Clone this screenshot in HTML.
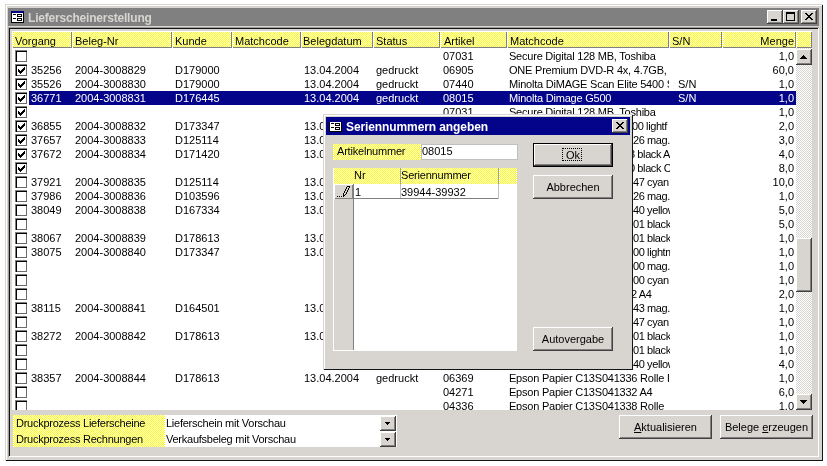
<!DOCTYPE html>
<html><head><meta charset="utf-8"><style>
html,body{margin:0;padding:0}
body{width:827px;height:466px;overflow:hidden;background:#fff;position:relative;font-family:"Liberation Sans",sans-serif;font-size:11px;color:#000}
div,svg{position:absolute}
.t{white-space:nowrap;line-height:14px;height:14px}
.b{font-weight:bold}
svg{display:block}
.t{will-change:transform}
</style></head><body>
<div style="left:5px;top:4px;width:818px;height:457px;background:#d8d5d1;box-shadow:inset 1px 1px #d8d5d1,inset -1px -1px #141414,inset 2px 2px #ffffff"></div>
<div style="left:8px;top:8px;width:811px;height:18px;background:#808080"></div>
<svg style="left:11px;top:11px" width="13" height="12" viewBox="0 0 13 12" shape-rendering="crispEdges"><rect x="0" y="0" width="13" height="12" fill="#000"/><rect x="0" y="0" width="13" height="2" fill="#000080"/><rect x="1" y="2" width="11" height="9" fill="#fff"/><rect x="2" y="3" width="3" height="1" fill="#000"/><rect x="2" y="7" width="3" height="1" fill="#000"/><rect x="6" y="3" width="5" height="3" fill="#000"/><rect x="7" y="4" width="3" height="1" fill="#fff"/><rect x="6" y="7" width="5" height="3" fill="#000"/><rect x="7" y="8" width="3" height="1" fill="#fff"/></svg>
<div class="t b" style="left:28px;top:11px;color:#d8d5d1;font-size:12px;letter-spacing:-0.2px">Lieferscheinerstellung</div>
<div style="left:767px;top:10px;width:16px;height:14px;background:#d8d5d1;box-shadow:inset -1px -1px #404040,inset 1px 1px #ffffff,inset -2px -2px #808080,inset 2px 2px #d8d5d1"></div>
<div style="left:771px;top:19px;width:6px;height:2px;background:#000"></div>
<div style="left:783px;top:10px;width:16px;height:14px;background:#d8d5d1;box-shadow:inset -1px -1px #404040,inset 1px 1px #ffffff,inset -2px -2px #808080,inset 2px 2px #d8d5d1"></div>
<div style="left:786px;top:12px;width:9px;height:9px;box-sizing:border-box;border:1px solid #000;border-top-width:2px"></div>
<div style="left:801px;top:10px;width:16px;height:14px;background:#d8d5d1;box-shadow:inset -1px -1px #404040,inset 1px 1px #ffffff,inset -2px -2px #808080,inset 2px 2px #d8d5d1"></div>
<svg style="left:805px;top:13px" width="8" height="7" viewBox="0 0 8 7" shape-rendering="crispEdges"><path d="M0 0h2v1h-2zM6 0h2v1h-2zM1 1h2v1h-2zM5 1h2v1h-2zM2 2h4v1h-4zM3 3h2v1h-2zM2 4h4v1h-4zM1 5h2v1h-2zM5 5h2v1h-2zM0 6h2v1h-2zM6 6h2v1h-2z" fill="#000"/></svg>
<div style="left:8px;top:27px;width:811px;height:430px;background:#d8d5d1;box-shadow:inset 1px 1px #a0a0a0,inset -1px -1px #ffffff,inset 2px 2px #141414,inset -2px -2px #d8d5d1"></div>
<div style="left:12px;top:48px;width:784px;height:362px;background:#fff"></div>
<div style="left:12px;top:31px;width:60px;height:17px;background:conic-gradient(#fff 25%,#ff0 0 50%,#fff 0 75%,#ff0 0) 0 0/2px 2px;box-shadow:inset 1px 1px #fff,inset -1px -1px #808080"></div>
<div class="t" style="left:15px;top:34px;">Vorgang</div>
<div style="left:72px;top:31px;width:100px;height:17px;background:conic-gradient(#fff 25%,#ff0 0 50%,#fff 0 75%,#ff0 0) 0 0/2px 2px;box-shadow:inset 1px 1px #fff,inset -1px -1px #808080"></div>
<div class="t" style="left:75px;top:34px;">Beleg-Nr</div>
<div style="left:172px;top:31px;width:60px;height:17px;background:conic-gradient(#fff 25%,#ff0 0 50%,#fff 0 75%,#ff0 0) 0 0/2px 2px;box-shadow:inset 1px 1px #fff,inset -1px -1px #808080"></div>
<div class="t" style="left:175px;top:34px;">Kunde</div>
<div style="left:232px;top:31px;width:69px;height:17px;background:conic-gradient(#fff 25%,#ff0 0 50%,#fff 0 75%,#ff0 0) 0 0/2px 2px;box-shadow:inset 1px 1px #fff,inset -1px -1px #808080"></div>
<div class="t" style="left:235px;top:34px;">Matchcode</div>
<div style="left:301px;top:31px;width:72px;height:17px;background:conic-gradient(#fff 25%,#ff0 0 50%,#fff 0 75%,#ff0 0) 0 0/2px 2px;box-shadow:inset 1px 1px #fff,inset -1px -1px #808080"></div>
<div class="t" style="left:303px;top:34px;">Belegdatum</div>
<div style="left:373px;top:31px;width:67px;height:17px;background:conic-gradient(#fff 25%,#ff0 0 50%,#fff 0 75%,#ff0 0) 0 0/2px 2px;box-shadow:inset 1px 1px #fff,inset -1px -1px #808080"></div>
<div class="t" style="left:376px;top:34px;">Status</div>
<div style="left:440px;top:31px;width:67px;height:17px;background:conic-gradient(#fff 25%,#ff0 0 50%,#fff 0 75%,#ff0 0) 0 0/2px 2px;box-shadow:inset 1px 1px #fff,inset -1px -1px #808080"></div>
<div class="t" style="left:444px;top:34px;">Artikel</div>
<div style="left:507px;top:31px;width:162px;height:17px;background:conic-gradient(#fff 25%,#ff0 0 50%,#fff 0 75%,#ff0 0) 0 0/2px 2px;box-shadow:inset 1px 1px #fff,inset -1px -1px #808080"></div>
<div class="t" style="left:510px;top:34px;">Matchcode</div>
<div style="left:669px;top:31px;width:53px;height:17px;background:conic-gradient(#fff 25%,#ff0 0 50%,#fff 0 75%,#ff0 0) 0 0/2px 2px;box-shadow:inset 1px 1px #fff,inset -1px -1px #808080"></div>
<div class="t" style="left:672px;top:34px;">S/N</div>
<div style="left:722px;top:31px;width:74px;height:17px;background:conic-gradient(#fff 25%,#ff0 0 50%,#fff 0 75%,#ff0 0) 0 0/2px 2px;box-shadow:inset 1px 1px #fff,inset -1px -1px #808080"></div>
<div class="t" style="left:722px;top:34px;width:72px;text-align:right;">Menge</div>
<div style="left:796px;top:31px;width:16px;height:17px;background:conic-gradient(#fff 25%,#ff0 0 50%,#fff 0 75%,#ff0 0) 0 0/2px 2px;box-shadow:inset 1px 1px #fff,inset -1px -1px #808080"></div>
<div style="left:12px;top:48px;width:784px;height:362px;overflow:hidden">
<div style="left:3px;top:2px;width:12px;height:12px;background:#fff;box-shadow:inset 1px 1px #808080,inset 2px 2px #000,inset -1px -1px #6a6a6a"></div>
<div class="t" style="left:431px;top:1px;color:#000;">07031</div>
<div class="t" style="left:497px;top:1px;width:160px;overflow:hidden;color:#000;letter-spacing:-0.22px">Secure Digital 128 MB, Toshiba</div>
<div class="t" style="left:710px;top:1px;width:72px;text-align:right;color:#000">1,0</div>
<div style="left:3px;top:16px;width:12px;height:12px;background:#fff;box-shadow:inset 1px 1px #808080,inset 2px 2px #000,inset -1px -1px #6a6a6a"></div>
<svg style="left:6px;top:19px" width="7" height="7" viewBox="0 0 7 7" shape-rendering="crispEdges"><path d="M6 0h1v1h-1zM5 1h2v1h-2zM0 2h1v1h-1zM4 2h3v1h-3zM0 3h2v1h-2zM3 3h3v1h-3zM0 4h5v1h-5zM1 5h3v1h-3zM2 6h1v1h-1z" fill="#000"/></svg>
<div class="t" style="left:19px;top:15px;color:#000;">35256</div>
<div class="t" style="left:63px;top:15px;color:#000;">2004-3008829</div>
<div class="t" style="left:163px;top:15px;color:#000;">D179000</div>
<div class="t" style="left:292px;top:15px;color:#000;">13.04.2004</div>
<div class="t" style="left:364px;top:15px;color:#000;">gedruckt</div>
<div class="t" style="left:431px;top:15px;color:#000;">06905</div>
<div class="t" style="left:497px;top:15px;width:160px;overflow:hidden;color:#000;letter-spacing:-0.22px">ONE Premium DVD-R 4x, 4.7GB, g</div>
<div class="t" style="left:710px;top:15px;width:72px;text-align:right;color:#000">60,0</div>
<div style="left:3px;top:30px;width:12px;height:12px;background:#fff;box-shadow:inset 1px 1px #808080,inset 2px 2px #000,inset -1px -1px #6a6a6a"></div>
<svg style="left:6px;top:33px" width="7" height="7" viewBox="0 0 7 7" shape-rendering="crispEdges"><path d="M6 0h1v1h-1zM5 1h2v1h-2zM0 2h1v1h-1zM4 2h3v1h-3zM0 3h2v1h-2zM3 3h3v1h-3zM0 4h5v1h-5zM1 5h3v1h-3zM2 6h1v1h-1z" fill="#000"/></svg>
<div class="t" style="left:19px;top:29px;color:#000;">35526</div>
<div class="t" style="left:63px;top:29px;color:#000;">2004-3008830</div>
<div class="t" style="left:163px;top:29px;color:#000;">D179000</div>
<div class="t" style="left:292px;top:29px;color:#000;">13.04.2004</div>
<div class="t" style="left:364px;top:29px;color:#000;">gedruckt</div>
<div class="t" style="left:431px;top:29px;color:#000;">07440</div>
<div class="t" style="left:497px;top:29px;width:160px;overflow:hidden;color:#000;letter-spacing:-0.22px">Minolta DiMAGE Scan Elite 5400 S</div>
<div class="t" style="left:666px;top:29px;color:#000;">S/N</div>
<div class="t" style="left:710px;top:29px;width:72px;text-align:right;color:#000">1,0</div>
<div style="left:17px;top:43px;width:767px;height:14px;background:#04048a"></div>
<div style="left:3px;top:44px;width:12px;height:12px;background:#fff;box-shadow:inset 1px 1px #808080,inset 2px 2px #000,inset -1px -1px #6a6a6a"></div>
<svg style="left:6px;top:47px" width="7" height="7" viewBox="0 0 7 7" shape-rendering="crispEdges"><path d="M6 0h1v1h-1zM5 1h2v1h-2zM0 2h1v1h-1zM4 2h3v1h-3zM0 3h2v1h-2zM3 3h3v1h-3zM0 4h5v1h-5zM1 5h3v1h-3zM2 6h1v1h-1z" fill="#000"/></svg>
<div class="t" style="left:19px;top:43px;color:#fff;">36771</div>
<div class="t" style="left:63px;top:43px;color:#fff;">2004-3008831</div>
<div class="t" style="left:163px;top:43px;color:#fff;">D176445</div>
<div class="t" style="left:292px;top:43px;color:#fff;">13.04.2004</div>
<div class="t" style="left:364px;top:43px;color:#fff;">gedruckt</div>
<div class="t" style="left:431px;top:43px;color:#fff;">08015</div>
<div class="t" style="left:497px;top:43px;width:160px;overflow:hidden;color:#fff;letter-spacing:-0.22px">Minolta Dimage G500</div>
<div class="t" style="left:666px;top:43px;color:#fff;">S/N</div>
<div class="t" style="left:710px;top:43px;width:72px;text-align:right;color:#fff">1,0</div>
<div style="left:3px;top:58px;width:12px;height:12px;background:#fff;box-shadow:inset 1px 1px #808080,inset 2px 2px #000,inset -1px -1px #6a6a6a"></div>
<svg style="left:6px;top:61px" width="7" height="7" viewBox="0 0 7 7" shape-rendering="crispEdges"><path d="M6 0h1v1h-1zM5 1h2v1h-2zM0 2h1v1h-1zM4 2h3v1h-3zM0 3h2v1h-2zM3 3h3v1h-3zM0 4h5v1h-5zM1 5h3v1h-3zM2 6h1v1h-1z" fill="#000"/></svg>
<div class="t" style="left:431px;top:57px;color:#000;">07031</div>
<div class="t" style="left:497px;top:57px;width:160px;overflow:hidden;color:#000;letter-spacing:-0.22px">Secure Digital 128 MB, Toshiba</div>
<div class="t" style="left:710px;top:57px;width:72px;text-align:right;color:#000">1,0</div>
<div style="left:3px;top:72px;width:12px;height:12px;background:#fff;box-shadow:inset 1px 1px #808080,inset 2px 2px #000,inset -1px -1px #6a6a6a"></div>
<svg style="left:6px;top:75px" width="7" height="7" viewBox="0 0 7 7" shape-rendering="crispEdges"><path d="M6 0h1v1h-1zM5 1h2v1h-2zM0 2h1v1h-1zM4 2h3v1h-3zM0 3h2v1h-2zM3 3h3v1h-3zM0 4h5v1h-5zM1 5h3v1h-3zM2 6h1v1h-1z" fill="#000"/></svg>
<div class="t" style="left:19px;top:71px;color:#000;">36855</div>
<div class="t" style="left:63px;top:71px;color:#000;">2004-3008832</div>
<div class="t" style="left:163px;top:71px;color:#000;">D173347</div>
<div class="t" style="left:292px;top:71px;color:#000;">13.04.2004</div>
<div class="t" style="left:364px;top:71px;color:#000;">gedruckt</div>
<div class="t" style="left:620px;top:71px;width:38px;overflow:hidden;color:#000;letter-spacing:-0.4px">00 lightf</div>
<div class="t" style="left:710px;top:71px;width:72px;text-align:right;color:#000">2,0</div>
<div style="left:3px;top:86px;width:12px;height:12px;background:#fff;box-shadow:inset 1px 1px #808080,inset 2px 2px #000,inset -1px -1px #6a6a6a"></div>
<svg style="left:6px;top:89px" width="7" height="7" viewBox="0 0 7 7" shape-rendering="crispEdges"><path d="M6 0h1v1h-1zM5 1h2v1h-2zM0 2h1v1h-1zM4 2h3v1h-3zM0 3h2v1h-2zM3 3h3v1h-3zM0 4h5v1h-5zM1 5h3v1h-3zM2 6h1v1h-1z" fill="#000"/></svg>
<div class="t" style="left:19px;top:85px;color:#000;">37657</div>
<div class="t" style="left:63px;top:85px;color:#000;">2004-3008833</div>
<div class="t" style="left:163px;top:85px;color:#000;">D125114</div>
<div class="t" style="left:292px;top:85px;color:#000;">13.04.2004</div>
<div class="t" style="left:364px;top:85px;color:#000;">gedruckt</div>
<div class="t" style="left:621px;top:85px;width:37px;overflow:hidden;color:#000;letter-spacing:-0.4px">26 mag.</div>
<div class="t" style="left:710px;top:85px;width:72px;text-align:right;color:#000">3,0</div>
<div style="left:3px;top:100px;width:12px;height:12px;background:#fff;box-shadow:inset 1px 1px #808080,inset 2px 2px #000,inset -1px -1px #6a6a6a"></div>
<svg style="left:6px;top:103px" width="7" height="7" viewBox="0 0 7 7" shape-rendering="crispEdges"><path d="M6 0h1v1h-1zM5 1h2v1h-2zM0 2h1v1h-1zM4 2h3v1h-3zM0 3h2v1h-2zM3 3h3v1h-3zM0 4h5v1h-5zM1 5h3v1h-3zM2 6h1v1h-1z" fill="#000"/></svg>
<div class="t" style="left:19px;top:99px;color:#000;">37672</div>
<div class="t" style="left:63px;top:99px;color:#000;">2004-3008834</div>
<div class="t" style="left:163px;top:99px;color:#000;">D171420</div>
<div class="t" style="left:292px;top:99px;color:#000;">13.04.2004</div>
<div class="t" style="left:364px;top:99px;color:#000;">gedruckt</div>
<div class="t" style="left:617px;top:99px;width:41px;overflow:hidden;color:#000;letter-spacing:-0.4px">3 black A</div>
<div class="t" style="left:710px;top:99px;width:72px;text-align:right;color:#000">4,0</div>
<div style="left:3px;top:114px;width:12px;height:12px;background:#fff;box-shadow:inset 1px 1px #808080,inset 2px 2px #000,inset -1px -1px #6a6a6a"></div>
<svg style="left:6px;top:117px" width="7" height="7" viewBox="0 0 7 7" shape-rendering="crispEdges"><path d="M6 0h1v1h-1zM5 1h2v1h-2zM0 2h1v1h-1zM4 2h3v1h-3zM0 3h2v1h-2zM3 3h3v1h-3zM0 4h5v1h-5zM1 5h3v1h-3zM2 6h1v1h-1z" fill="#000"/></svg>
<div class="t" style="left:617px;top:113px;width:41px;overflow:hidden;color:#000;letter-spacing:-0.4px">0 black C</div>
<div class="t" style="left:710px;top:113px;width:72px;text-align:right;color:#000">8,0</div>
<div style="left:3px;top:128px;width:12px;height:12px;background:#fff;box-shadow:inset 1px 1px #808080,inset 2px 2px #000,inset -1px -1px #6a6a6a"></div>
<div class="t" style="left:19px;top:127px;color:#000;">37921</div>
<div class="t" style="left:63px;top:127px;color:#000;">2004-3008835</div>
<div class="t" style="left:163px;top:127px;color:#000;">D125114</div>
<div class="t" style="left:292px;top:127px;color:#000;">13.04.2004</div>
<div class="t" style="left:364px;top:127px;color:#000;">gedruckt</div>
<div class="t" style="left:621px;top:127px;width:37px;overflow:hidden;color:#000;letter-spacing:-0.4px">47 cyan</div>
<div class="t" style="left:710px;top:127px;width:72px;text-align:right;color:#000">10,0</div>
<div style="left:3px;top:142px;width:12px;height:12px;background:#fff;box-shadow:inset 1px 1px #808080,inset 2px 2px #000,inset -1px -1px #6a6a6a"></div>
<div class="t" style="left:19px;top:141px;color:#000;">37986</div>
<div class="t" style="left:63px;top:141px;color:#000;">2004-3008836</div>
<div class="t" style="left:163px;top:141px;color:#000;">D103596</div>
<div class="t" style="left:292px;top:141px;color:#000;">13.04.2004</div>
<div class="t" style="left:364px;top:141px;color:#000;">gedruckt</div>
<div class="t" style="left:621px;top:141px;width:37px;overflow:hidden;color:#000;letter-spacing:-0.4px">26 mag.</div>
<div class="t" style="left:710px;top:141px;width:72px;text-align:right;color:#000">1,0</div>
<div style="left:3px;top:156px;width:12px;height:12px;background:#fff;box-shadow:inset 1px 1px #808080,inset 2px 2px #000,inset -1px -1px #6a6a6a"></div>
<div class="t" style="left:19px;top:155px;color:#000;">38049</div>
<div class="t" style="left:63px;top:155px;color:#000;">2004-3008838</div>
<div class="t" style="left:163px;top:155px;color:#000;">D167334</div>
<div class="t" style="left:292px;top:155px;color:#000;">13.04.2004</div>
<div class="t" style="left:364px;top:155px;color:#000;">gedruckt</div>
<div class="t" style="left:621px;top:155px;width:37px;overflow:hidden;color:#000;letter-spacing:-0.4px">40 yellow</div>
<div class="t" style="left:710px;top:155px;width:72px;text-align:right;color:#000">5,0</div>
<div style="left:3px;top:170px;width:12px;height:12px;background:#fff;box-shadow:inset 1px 1px #808080,inset 2px 2px #000,inset -1px -1px #6a6a6a"></div>
<div class="t" style="left:621px;top:169px;width:37px;overflow:hidden;color:#000;letter-spacing:-0.4px">01 black</div>
<div class="t" style="left:710px;top:169px;width:72px;text-align:right;color:#000">5,0</div>
<div style="left:3px;top:184px;width:12px;height:12px;background:#fff;box-shadow:inset 1px 1px #808080,inset 2px 2px #000,inset -1px -1px #6a6a6a"></div>
<div class="t" style="left:19px;top:183px;color:#000;">38067</div>
<div class="t" style="left:63px;top:183px;color:#000;">2004-3008839</div>
<div class="t" style="left:163px;top:183px;color:#000;">D178613</div>
<div class="t" style="left:292px;top:183px;color:#000;">13.04.2004</div>
<div class="t" style="left:364px;top:183px;color:#000;">gedruckt</div>
<div class="t" style="left:621px;top:183px;width:37px;overflow:hidden;color:#000;letter-spacing:-0.4px">01 black</div>
<div class="t" style="left:710px;top:183px;width:72px;text-align:right;color:#000">1,0</div>
<div style="left:3px;top:198px;width:12px;height:12px;background:#fff;box-shadow:inset 1px 1px #808080,inset 2px 2px #000,inset -1px -1px #6a6a6a"></div>
<div class="t" style="left:19px;top:197px;color:#000;">38075</div>
<div class="t" style="left:63px;top:197px;color:#000;">2004-3008840</div>
<div class="t" style="left:163px;top:197px;color:#000;">D173347</div>
<div class="t" style="left:292px;top:197px;color:#000;">13.04.2004</div>
<div class="t" style="left:364px;top:197px;color:#000;">gedruckt</div>
<div class="t" style="left:621px;top:197px;width:37px;overflow:hidden;color:#000;letter-spacing:-0.4px">00 lightm</div>
<div class="t" style="left:710px;top:197px;width:72px;text-align:right;color:#000">1,0</div>
<div style="left:3px;top:212px;width:12px;height:12px;background:#fff;box-shadow:inset 1px 1px #808080,inset 2px 2px #000,inset -1px -1px #6a6a6a"></div>
<div class="t" style="left:621px;top:211px;width:37px;overflow:hidden;color:#000;letter-spacing:-0.4px">00 mag.</div>
<div class="t" style="left:710px;top:211px;width:72px;text-align:right;color:#000">1,0</div>
<div style="left:3px;top:226px;width:12px;height:12px;background:#fff;box-shadow:inset 1px 1px #808080,inset 2px 2px #000,inset -1px -1px #6a6a6a"></div>
<div class="t" style="left:621px;top:225px;width:37px;overflow:hidden;color:#000;letter-spacing:-0.4px">00 cyan</div>
<div class="t" style="left:710px;top:225px;width:72px;text-align:right;color:#000">1,0</div>
<div style="left:3px;top:240px;width:12px;height:12px;background:#fff;box-shadow:inset 1px 1px #808080,inset 2px 2px #000,inset -1px -1px #6a6a6a"></div>
<div class="t" style="left:619px;top:239px;width:39px;overflow:hidden;color:#000;letter-spacing:-0.4px">2 A4</div>
<div class="t" style="left:710px;top:239px;width:72px;text-align:right;color:#000">2,0</div>
<div style="left:3px;top:254px;width:12px;height:12px;background:#fff;box-shadow:inset 1px 1px #808080,inset 2px 2px #000,inset -1px -1px #6a6a6a"></div>
<div class="t" style="left:19px;top:253px;color:#000;">38115</div>
<div class="t" style="left:63px;top:253px;color:#000;">2004-3008841</div>
<div class="t" style="left:163px;top:253px;color:#000;">D164501</div>
<div class="t" style="left:292px;top:253px;color:#000;">13.04.2004</div>
<div class="t" style="left:364px;top:253px;color:#000;">gedruckt</div>
<div class="t" style="left:621px;top:253px;width:37px;overflow:hidden;color:#000;letter-spacing:-0.4px">43 mag.</div>
<div class="t" style="left:710px;top:253px;width:72px;text-align:right;color:#000">1,0</div>
<div style="left:3px;top:268px;width:12px;height:12px;background:#fff;box-shadow:inset 1px 1px #808080,inset 2px 2px #000,inset -1px -1px #6a6a6a"></div>
<div class="t" style="left:621px;top:267px;width:37px;overflow:hidden;color:#000;letter-spacing:-0.4px">47 cyan</div>
<div class="t" style="left:710px;top:267px;width:72px;text-align:right;color:#000">1,0</div>
<div style="left:3px;top:282px;width:12px;height:12px;background:#fff;box-shadow:inset 1px 1px #808080,inset 2px 2px #000,inset -1px -1px #6a6a6a"></div>
<div class="t" style="left:19px;top:281px;color:#000;">38272</div>
<div class="t" style="left:63px;top:281px;color:#000;">2004-3008842</div>
<div class="t" style="left:163px;top:281px;color:#000;">D178613</div>
<div class="t" style="left:292px;top:281px;color:#000;">13.04.2004</div>
<div class="t" style="left:364px;top:281px;color:#000;">gedruckt</div>
<div class="t" style="left:621px;top:281px;width:37px;overflow:hidden;color:#000;letter-spacing:-0.4px">01 black</div>
<div class="t" style="left:710px;top:281px;width:72px;text-align:right;color:#000">1,0</div>
<div style="left:3px;top:296px;width:12px;height:12px;background:#fff;box-shadow:inset 1px 1px #808080,inset 2px 2px #000,inset -1px -1px #6a6a6a"></div>
<div class="t" style="left:621px;top:295px;width:37px;overflow:hidden;color:#000;letter-spacing:-0.4px">01 black</div>
<div class="t" style="left:710px;top:295px;width:72px;text-align:right;color:#000">1,0</div>
<div style="left:3px;top:310px;width:12px;height:12px;background:#fff;box-shadow:inset 1px 1px #808080,inset 2px 2px #000,inset -1px -1px #6a6a6a"></div>
<div class="t" style="left:621px;top:309px;width:37px;overflow:hidden;color:#000;letter-spacing:-0.4px">40 yellow</div>
<div class="t" style="left:710px;top:309px;width:72px;text-align:right;color:#000">4,0</div>
<div style="left:3px;top:324px;width:12px;height:12px;background:#fff;box-shadow:inset 1px 1px #808080,inset 2px 2px #000,inset -1px -1px #6a6a6a"></div>
<div class="t" style="left:19px;top:323px;color:#000;">38357</div>
<div class="t" style="left:63px;top:323px;color:#000;">2004-3008844</div>
<div class="t" style="left:163px;top:323px;color:#000;">D178613</div>
<div class="t" style="left:292px;top:323px;color:#000;">13.04.2004</div>
<div class="t" style="left:364px;top:323px;color:#000;">gedruckt</div>
<div class="t" style="left:431px;top:323px;color:#000;">06369</div>
<div class="t" style="left:497px;top:323px;width:160px;overflow:hidden;color:#000;letter-spacing:-0.22px">Epson Papier C13S041336 Rolle F</div>
<div class="t" style="left:710px;top:323px;width:72px;text-align:right;color:#000">1,0</div>
<div style="left:3px;top:338px;width:12px;height:12px;background:#fff;box-shadow:inset 1px 1px #808080,inset 2px 2px #000,inset -1px -1px #6a6a6a"></div>
<div class="t" style="left:431px;top:337px;color:#000;">04271</div>
<div class="t" style="left:497px;top:337px;width:160px;overflow:hidden;color:#000;letter-spacing:-0.22px">Epson Papier C13S041332 A4</div>
<div class="t" style="left:710px;top:337px;width:72px;text-align:right;color:#000">6,0</div>
<div style="left:3px;top:352px;width:12px;height:12px;background:#fff;box-shadow:inset 1px 1px #808080,inset 2px 2px #000,inset -1px -1px #6a6a6a"></div>
<div class="t" style="left:431px;top:351px;color:#000;">04336</div>
<div class="t" style="left:497px;top:351px;width:160px;overflow:hidden;color:#000;letter-spacing:-0.22px">Epson Papier C13S041338 Rolle</div>
<div class="t" style="left:710px;top:351px;width:72px;text-align:right;color:#000">1,0</div>
</div>
<div style="left:796px;top:48px;width:16px;height:362px;background:conic-gradient(#fff 25%,#d8d5d1 0 50%,#fff 0 75%,#d8d5d1 0) 0 0/2px 2px"></div>
<div style="left:796px;top:49px;width:16px;height:16px;background:#d8d5d1;box-shadow:inset -1px -1px #404040,inset 1px 1px #ffffff,inset -2px -2px #808080,inset 2px 2px #d8d5d1"></div>
<svg style="left:800px;top:55px" width="7" height="4" viewBox="0 0 7 4" shape-rendering="crispEdges"><path d="M3 0h1v1h-1zM2 1h3v1h-3zM1 2h5v1h-5zM0 3h7v1h-7z" fill="#000"/></svg>
<div style="left:796px;top:394px;width:16px;height:16px;background:#d8d5d1;box-shadow:inset -1px -1px #404040,inset 1px 1px #ffffff,inset -2px -2px #808080,inset 2px 2px #d8d5d1"></div>
<svg style="left:800px;top:400px" width="7" height="4" viewBox="0 0 7 4" shape-rendering="crispEdges"><path d="M0 0h7v1h-7zM1 1h5v1h-5zM2 2h3v1h-3zM3 3h1v1h-1z" fill="#000"/></svg>
<div style="left:796px;top:238px;width:16px;height:54px;background:#d8d5d1;box-shadow:inset -1px -1px #404040,inset 1px 1px #ffffff,inset -2px -2px #808080,inset 2px 2px #d8d5d1"></div>
<div style="left:13px;top:415px;width:152px;height:16px;background:conic-gradient(#fff 25%,#ff0 0 50%,#fff 0 75%,#ff0 0) 0 0/2px 2px"></div>
<div style="left:13px;top:431px;width:152px;height:16px;background:conic-gradient(#fff 25%,#ff0 0 50%,#fff 0 75%,#ff0 0) 0 0/2px 2px"></div>
<div class="t" style="left:16px;top:416px;letter-spacing:-0.25px">Druckprozess Lieferscheine</div>
<div class="t" style="left:16px;top:432px;letter-spacing:-0.25px">Druckprozess Rechnungen</div>
<div style="left:165px;top:415px;width:232px;height:16px;background:#fff"></div>
<div style="left:165px;top:431px;width:232px;height:16px;background:#fff"></div>
<div class="t" style="left:166px;top:416px;letter-spacing:-0.25px">Lieferschein mit Vorschau</div>
<div class="t" style="left:166px;top:432px;letter-spacing:-0.25px">Verkaufsbeleg mit Vorschau</div>
<div style="left:380px;top:416px;width:16px;height:15px;background:#d8d5d1;box-shadow:inset -1px -1px #404040,inset 1px 1px #ffffff,inset -2px -2px #808080,inset 2px 2px #d8d5d1"></div>
<svg style="left:385px;top:422px" width="5" height="3" viewBox="0 0 5 3" shape-rendering="crispEdges"><path d="M0 0h5v1h-5zM1 1h3v1h-3zM2 2h1v1h-1z" fill="#000"/></svg>
<div style="left:380px;top:432px;width:16px;height:15px;background:#d8d5d1;box-shadow:inset -1px -1px #404040,inset 1px 1px #ffffff,inset -2px -2px #808080,inset 2px 2px #d8d5d1"></div>
<svg style="left:385px;top:438px" width="5" height="3" viewBox="0 0 5 3" shape-rendering="crispEdges"><path d="M0 0h5v1h-5zM1 1h3v1h-3zM2 2h1v1h-1z" fill="#000"/></svg>
<div style="left:619px;top:415px;width:93px;height:24px;background:#d8d5d1;box-shadow:inset -1px -1px #404040,inset 1px 1px #ffffff,inset -2px -2px #808080,inset 2px 2px #d8d5d1"></div>
<div class="t" style="left:619px;top:420px;width:93px;text-align:center"><u>A</u>ktualisieren</div>
<div style="left:720px;top:415px;width:93px;height:24px;background:#d8d5d1;box-shadow:inset -1px -1px #404040,inset 1px 1px #ffffff,inset -2px -2px #808080,inset 2px 2px #d8d5d1"></div>
<div class="t" style="left:720px;top:420px;width:93px;text-align:center">Belege <u>e</u>rzeugen</div>
<div style="left:323px;top:114px;width:310px;height:256px;background:#d8d5d1;box-shadow:inset 1px 1px #d8d5d1,inset -1px -1px #141414,inset 2px 2px #ffffff"></div>
<div style="left:326px;top:117px;width:304px;height:18px;background:#04048a"></div>
<svg style="left:329px;top:120px" width="13" height="12" viewBox="0 0 13 12" shape-rendering="crispEdges"><rect x="0" y="0" width="13" height="12" fill="#000"/><rect x="0" y="0" width="13" height="2" fill="#000080"/><rect x="1" y="2" width="11" height="9" fill="#fff"/><rect x="2" y="3" width="3" height="1" fill="#000"/><rect x="2" y="7" width="3" height="1" fill="#000"/><rect x="6" y="3" width="5" height="3" fill="#000"/><rect x="7" y="4" width="3" height="1" fill="#fff"/><rect x="6" y="7" width="5" height="3" fill="#000"/><rect x="7" y="8" width="3" height="1" fill="#fff"/></svg>
<div class="t b" style="left:346px;top:120px;color:#fff;font-size:12px;letter-spacing:-0.1px">Seriennummern angeben</div>
<div style="left:612px;top:119px;width:16px;height:14px;background:#d8d5d1;box-shadow:inset -1px -1px #404040,inset 1px 1px #ffffff,inset -2px -2px #808080,inset 2px 2px #d8d5d1"></div>
<svg style="left:616px;top:122px" width="8" height="7" viewBox="0 0 8 7" shape-rendering="crispEdges"><path d="M0 0h2v1h-2zM6 0h2v1h-2zM1 1h2v1h-2zM5 1h2v1h-2zM2 2h4v1h-4zM3 3h2v1h-2zM2 4h4v1h-4zM1 5h2v1h-2zM5 5h2v1h-2zM0 6h2v1h-2zM6 6h2v1h-2z" fill="#000"/></svg>
<div style="left:333px;top:144px;width:88px;height:16px;background:conic-gradient(#fff 25%,#ff0 0 50%,#fff 0 75%,#ff0 0) 0 0/2px 2px"></div>
<div class="t" style="left:337px;top:144px;letter-spacing:-0.2px">Artikelnummer</div>
<div style="left:421px;top:144px;width:97px;height:16px;background:#fff;box-sizing:border-box;border:1px solid #c0c0c0"></div>
<div class="t" style="left:422px;top:144px;">08015</div>
<div style="left:333px;top:168px;width:184px;height:183px;background:#fff"></div>
<div style="left:334px;top:168px;width:183px;height:16px;background:conic-gradient(#fff 25%,#ff0 0 50%,#fff 0 75%,#ff0 0) 0 0/2px 2px"></div>
<div style="left:400px;top:168px;width:1px;height:16px;background:#a0a0a0"></div>
<div style="left:498px;top:168px;width:1px;height:16px;background:#a0a0a0"></div>
<div class="t" style="left:354px;top:168px;">Nr</div>
<div class="t" style="left:401px;top:168px;letter-spacing:-0.2px">Seriennummer</div>
<div style="left:334px;top:184px;width:19px;height:166px;background:#d8d5d1"></div>
<div style="left:334px;top:184px;width:19px;height:15px;background:#d8d5d1;box-shadow:inset 1px 1px #fff,inset -1px -1px #808080"></div>
<div style="left:353px;top:184px;width:1px;height:166px;background:#808080"></div>
<div style="left:354px;top:198px;width:145px;height:1px;background:#808080"></div>
<div style="left:400px;top:184px;width:1px;height:14px;background:#c0c0c0"></div>
<div style="left:498px;top:184px;width:1px;height:15px;background:#c0c0c0"></div>
<div class="t" style="left:355px;top:185px;">1</div>
<div class="t" style="left:401px;top:185px;">39944-39932</div>
<svg style="left:336px;top:185px" width="15" height="13" viewBox="0 0 15 13" shape-rendering="crispEdges"><path d="M1 11h1v1h-1zM3 11h1v1h-1zM5 11h1v1h-1zM11 1h3v1h-3zM10 2h1v1h-1zM13 2h1v1h-1zM10 3h1v1h-1zM12 3h1v1h-1zM9 4h1v1h-1zM12 4h1v1h-1zM9 5h1v1h-1zM11 5h1v1h-1zM8 6h1v1h-1zM11 6h1v1h-1zM8 7h1v1h-1zM10 7h1v1h-1zM7 8h1v1h-1zM10 8h1v1h-1zM7 9h1v1h-1zM9 9h1v1h-1zM7 10h2v1h-2zM7 11h1v1h-1z" fill="#000"/></svg>
<div style="left:533px;top:143px;width:80px;height:24px;background:#d8d5d1;box-shadow:inset 0 0 0 1px #000,inset -2px -2px #404040,inset 2px 2px #ffffff,inset -3px -3px #808080"></div>
<div class="t" style="left:533px;top:148px;width:80px;text-align:center">Ok</div>
<div style="left:562px;top:148px;width:20px;height:13px;box-sizing:border-box;border:1px dotted #000"></div>
<div style="left:533px;top:175px;width:80px;height:24px;background:#d8d5d1;box-shadow:inset -1px -1px #404040,inset 1px 1px #ffffff,inset -2px -2px #808080,inset 2px 2px #d8d5d1"></div>
<div class="t" style="left:533px;top:180px;width:80px;text-align:center">Abbrechen</div>
<div style="left:533px;top:327px;width:80px;height:24px;background:#d8d5d1;box-shadow:inset -1px -1px #404040,inset 1px 1px #ffffff,inset -2px -2px #808080,inset 2px 2px #d8d5d1"></div>
<div class="t" style="left:533px;top:332px;width:80px;text-align:center">Autovergabe</div>
</body></html>
